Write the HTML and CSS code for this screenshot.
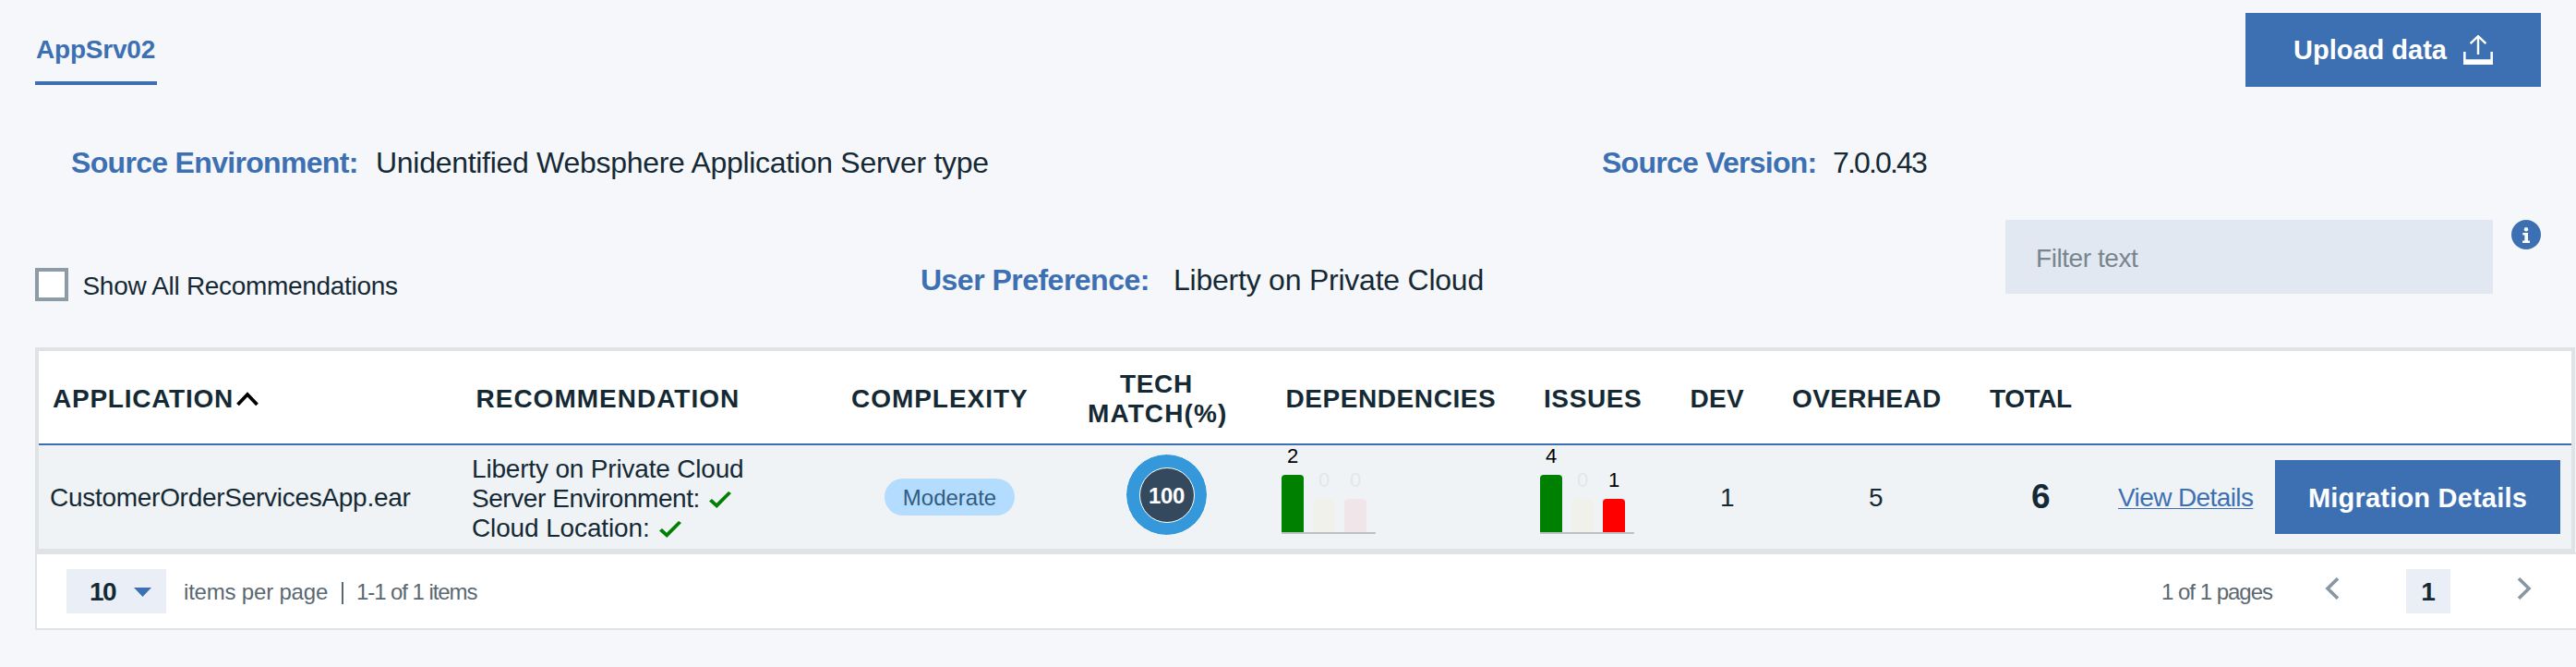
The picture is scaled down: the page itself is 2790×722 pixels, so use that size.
FILE: index.html
```
<!DOCTYPE html>
<html lang="en">
<head>
<meta charset="utf-8">
<title>AppSrv02 recommendations</title>
<link rel="stylesheet" href="styles.css">
</head>
<body>
<header class="topbar">
  <a class="tab">AppSrv02</a>
  <button class="btn upload"><span class="upload-text">Upload data</span>
    <svg class="upload-icon" width="32" height="32" viewBox="0 0 32 32"><path d="M0 18h2.6v8.2h26.8V18H32v14H0z" fill="#fff"/><path d="M16 21V1.5M7.6 9.2L16 1.2l8.4 8" fill="none" stroke="#fff" stroke-width="2.4"/></svg>
  </button>
</header>

<section class="source">
  <div class="pair env"><span class="label env-label">Source Environment:</span><span class="value env-value">Unidentified Websphere Application Server type</span></div>
  <div class="pair"><span class="label ver-label">Source Version:</span><span class="value ver-value">7.0.0.43</span></div>
</section>

<section class="filters">
  <label class="show-all"><span class="checkbox"></span><span class="show-all-text">Show All Recommendations</span></label>
  <div class="pair preference"><span class="label pref-label">User Preference:</span><span class="value pref-value">Liberty on Private Cloud</span></div>
  <div class="filter-box">Filter text</div>
  <svg class="info" width="32" height="32" viewBox="0 0 32 32"><circle cx="16" cy="16" r="16" fill="#3d70b2"/><circle cx="16" cy="10.2" r="2.2" fill="#fff"/><path d="M12.3 14H18v8.4h2V25h-8v-2.6h2.4v-5.8h-2.1z" fill="#fff"/></svg>
</section>

<section class="table">
  <div class="row head">
    <div class="cell h-app">APPLICATION<svg class="caret" width="24" height="16" viewBox="0 0 24 16"><path d="M1.5 14L12 3l10.500 11" fill="none" stroke="#000" stroke-width="3.800"/></svg></div>
    <div class="cell h-rec">RECOMMENDATION</div>
    <div class="cell h-cpx">COMPLEXITY</div>
    <div class="cell h-tech"><span class="tech-word">TECH</span><span class="match-word">MATCH(%)</span></div>
    <div class="cell h-dep">DEPENDENCIES</div>
    <div class="cell h-iss">ISSUES</div>
    <div class="cell h-dev">DEV</div>
    <div class="cell h-ovr">OVERHEAD</div>
    <div class="cell h-tot">TOTAL</div>
    <div class="cell"></div>
  </div>
  <div class="row body">
    <div class="cell b-app">CustomerOrderServicesApp.ear</div>
    <div class="cell b-rec">
      <div class="rec-line rec-target">Liberty on Private Cloud</div>
      <div class="rec-line"><span class="rec-server">Server Environment:</span><svg class="check" width="24" height="18" viewBox="0 0 24 18"><path d="M0 10.500L3 8L8 12.800L21 0L24 2L8.300 18z" fill="#008000"/></svg></div>
      <div class="rec-line"><span class="rec-cloud">Cloud Location:</span><svg class="check" width="24" height="18" viewBox="0 0 24 18"><path d="M0 10.500L3 8L8 12.800L21 0L24 2L8.300 18z" fill="#008000"/></svg></div>
    </div>
    <div class="cell b-cpx"><span class="pill">Moderate</span></div>
    <div class="cell b-tech"><div class="ring"><div class="ring-core">100</div></div></div>
    <div class="cell b-chart">
      <div class="chart">
        <div class="bar-col"><span class="count">2</span><span class="bar tall green"></span></div>
        <div class="bar-col faded"><span class="count">0</span><span class="bar yellow"></span></div>
        <div class="bar-col faded"><span class="count">0</span><span class="bar red"></span></div>
      </div>
    </div>
    <div class="cell b-chart">
      <div class="chart">
        <div class="bar-col"><span class="count">4</span><span class="bar tall green"></span></div>
        <div class="bar-col faded"><span class="count">0</span><span class="bar yellow"></span></div>
        <div class="bar-col"><span class="count">1</span><span class="bar red"></span></div>
      </div>
    </div>
    <div class="cell b-dev">1</div>
    <div class="cell b-ovr">5</div>
    <div class="cell b-tot">6</div>
    <div class="cell b-act"><a class="details">View Details</a><button class="btn migrate">Migration Details</button></div>
  </div>
</section>

<footer class="pager">
  <div class="page-size"><span class="size-value">10</span><svg class="size-arrow" width="19" height="10" viewBox="0 0 19 10"><path d="M0 0h19L9.500 10z" fill="#3d70b2"/></svg></div>
  <span class="per-page">items per page</span>
  <span class="divider"></span>
  <span class="range">1-1 of 1 items</span>
  <span class="pages">1 of 1 pages</span>
  <svg class="prev" width="16" height="24" viewBox="0 0 16 24"><path d="M14 1.200L3 12l11 10.800" fill="none" stroke="#8897a2" stroke-width="3.600"/></svg>
  <span class="current">1</span>
  <svg class="next" width="16" height="24" viewBox="0 0 16 24"><path d="M2 1.200L13 12L2 22.800" fill="none" stroke="#8897a2" stroke-width="3.600"/></svg>
</footer>
</body>
</html>
```
FILE: styles.css
```
* { box-sizing: border-box; }
body {
  margin: 0;
  padding-top: 14px;
  height: 722px;
  overflow: hidden;
  background: #f5f7fb;
  color: #152934;
  font-family: "Liberation Sans", Arial, sans-serif;
  font-size: 28px;
  line-height: 32px;
  white-space: nowrap;
}
svg { display: block; flex: none; }
.btn {
  display: flex;
  align-items: center;
  height: 80px;
  border: 0;
  padding: 0;
  background: #3d70b2;
  color: #fff;
  font: bold 29px/32px "Liberation Sans", Arial, sans-serif;
}

.topbar { display: flex; justify-content: space-between; align-items: flex-start; padding: 0 38px; height: 80px; }
.tab { width: 132px; height: 78px; padding: 24px 0 0 1px; border-bottom: 4px solid #3d70b2; color: #3d70b2; font-weight: bold; letter-spacing: -0.2px; }
.upload { width: 320px; padding-left: 52px; }
.upload-text { width: 184px; text-align: left; }

.pair { display: flex; font-size: 32px; line-height: 40px; }
.label { color: #3d70b2; font-weight: bold; }
.source { display: flex; margin: 62px 0 42px; padding-left: 77px; }
.env { width: 1658px; }
.env-label { width: 330px; letter-spacing: -0.68px; }
.env-value { letter-spacing: -0.29px; }
.ver-label { width: 250px; letter-spacing: -0.75px; }
.ver-value { letter-spacing: -1.84px; }

.filters { display: flex; align-items: flex-start; height: 138px; padding-left: 38px; }
.show-all { display: flex; width: 959px; padding-top: 52px; }
.checkbox { width: 36px; height: 36px; border: 4px solid #8c9ba5; background: #fff; }
.show-all-text { margin: 2px 0 0 15.5px; line-height: 36px; letter-spacing: -0.31px; }
.preference { width: 1175px; padding-top: 45px; }
.pref-label { width: 274px; letter-spacing: -0.52px; }
.pref-value { letter-spacing: -0.23px; }
.filter-box { width: 528px; height: 80px; padding-left: 33px; background: #e1e8f2; color: #78858c; line-height: 83px; letter-spacing: -0.44px; }
.info { margin-left: 20px; }

.table { width: 2751px; margin-left: 38px; border: 4px solid #dfe3e6; background: #fff; }
.row { display: grid; grid-template-columns: 464px 412px 260px 210px 280px 158px 110px 214px 140px 495px; }
.cell { display: flex; align-items: center; padding-top: 2px; }
.head { height: 102px; border-bottom: 2px solid #3d70b2; font-weight: bold; }
.head .cell { padding-top: 4px; }
.h-app { padding-left: 15px; letter-spacing: 0.75px; }
.caret { margin: 0 0 0 3px; }
.h-rec { padding-left: 9.5px; letter-spacing: 1px; }
.h-cpx { padding-left: 4px; letter-spacing: 0.96px; }
.h-tech { flex-direction: column; justify-content: center; align-items: flex-start; }
.tech-word { padding-left: 35px; letter-spacing: 0.67px; }
.match-word { letter-spacing: 1.1px; }
.h-dep { padding-left: 4.5px; letter-spacing: 0.57px; }
.h-iss { padding-left: 4px; letter-spacing: 0.59px; }
.h-dev { padding-left: 4.5px; letter-spacing: 0.3px; }
.h-ovr { padding-left: 5px; letter-spacing: 0.36px; }
.h-tot { padding-left: 5px; letter-spacing: -0.41px; }

.body { height: 112px; background: #eff3f6; }
.b-app { padding-left: 12px; letter-spacing: -0.28px; }
.b-rec { flex-direction: column; justify-content: center; align-items: flex-start; padding: 3px 0 0 5px; }
.rec-line { display: flex; height: 32px; }
.rec-target { letter-spacing: -0.18px; }
.rec-server { width: 257px; letter-spacing: -0.44px; }
.rec-cloud { width: 203px; letter-spacing: -0.13px; }
.check { margin-top: 8px; }
.b-cpx { padding: 0 0 0 40px; }
.pill { width: 141px; height: 40px; border-radius: 20px; background: #b3dcff; color: #325c80; font-size: 24px; line-height: 41px; text-align: center; }
.b-tech { padding: 0 0 5px 41px; }
.ring { display: flex; align-items: center; justify-content: center; width: 89px; height: 89px; border: 1px solid #fff; border-radius: 50%; background: #3498db; }
.ring-core { width: 60px; height: 60px; border: 1px solid #fff; border-radius: 50%; background: #34495e; color: #fff; font-size: 24px; font-weight: bold; line-height: 60px; text-align: center; letter-spacing: -0.35px; }
.b-chart { align-items: flex-end; padding: 0 0 16px; }
.chart { display: flex; align-items: flex-end; gap: 10px; width: 102px; height: 96px; border-bottom: 2px solid #c0c0c0; }
.bar-col { display: flex; flex-direction: column; align-items: center; width: 24px; color: #000; font-size: 22px; line-height: 24px; }
.count { margin-bottom: 8px; }
.bar { width: 24px; height: 36px; border-radius: 4px 4px 0 0; }
.tall { height: 62px; }
.green { background: #008000; }
.red { background: #ff0000; }
.faded { color: #e3e7ea; }
.faded .yellow { background: #f0f1eb; }
.faded .red { background: #f0e6ea; }
.b-dev { padding-left: 37px; }
.b-ovr { padding-left: 88px; }
.b-tot { padding: 0 0 0 50px; font-size: 37px; font-weight: bold; }
.b-act { padding: 0 0 0 4px; }
.details { width: 170px; padding-top: 2px; color: #3d70b2; letter-spacing: -0.6px; text-decoration: underline; text-decoration-thickness: 1px; text-underline-offset: 2px; }
.migrate { width: 309px; padding: 2px 0 0 36px; letter-spacing: 0.2px; }

.pager { display: flex; align-items: center; width: 2752px; height: 84px; margin-left: 38px; padding-left: 32px; border: 2px solid #dfe3e6; border-right: 0; background: #fff; color: #5a6872; font-size: 24px; }
.page-size { display: flex; align-items: center; width: 108px; height: 48px; padding-left: 25px; background: #e9eef7; }
.size-value { width: 48px; padding-top: 2px; color: #152934; font-size: 28px; font-weight: bold; letter-spacing: -1.57px; }
.size-arrow { margin-top: 2px; }
.per-page { width: 171px; margin-left: 19px; padding-top: 1px; letter-spacing: -0.19px; }
.divider { width: 2px; height: 24px; margin-top: 4px; background: #5a6872; }
.range { margin-left: 14px; padding-top: 1px; letter-spacing: -1.07px; }
.pages { width: 121px; margin-left: auto; padding-top: 1px; letter-spacing: -1.01px; }
.prev { margin: 0 72px 6px 56px; }
.current { width: 48px; height: 48px; background: #e9eef7; color: #152934; font-size: 28px; font-weight: bold; line-height: 50px; text-align: center; }
.next { margin: 0 48px 6px 72px; }
```
